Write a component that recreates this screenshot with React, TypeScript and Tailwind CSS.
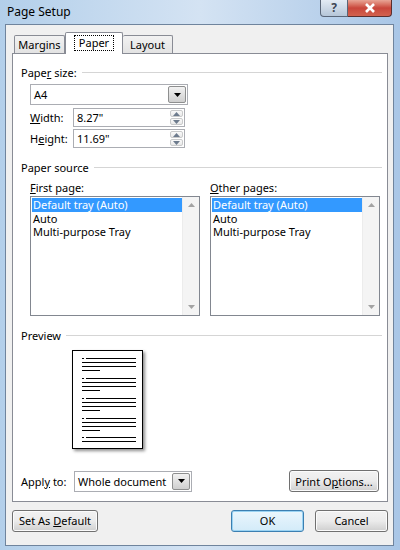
const font = { fontFamily: '"Noto Sans", "Liberation Sans", sans-serif' };

function GroupLabel({ children }: { children: React.ReactNode }) {
  return (
    <div className="flex items-center h-[15px] pl-[8px] pr-[5px]">
      <span className="pr-[5px]">{children}</span>
      <div className="flex-1 border-t border-[#d5d5d5] border-b-white h-[2px] border-b" />
    </div>
  );
}

function DownArrow({ color = '#000' }: { color?: string }) {
  return (
    <svg width="7" height="4" viewBox="0 0 7 4">
      <path d="M0 0h7L3.5 4z" fill={color} />
    </svg>
  );
}

function UpArrow({ color = '#000' }: { color?: string }) {
  return (
    <svg width="7" height="4" viewBox="0 0 7 4">
      <path d="M0 4h7L3.5 0z" fill={color} />
    </svg>
  );
}

function Combo({ value, width }: { value: string; width: string }) {
  return (
    <div className={`flex h-[21px] ${width} border border-[#abadb3] bg-white`}>
      <div className="flex-1 flex items-center pl-[3px] whitespace-nowrap overflow-hidden">{value}</div>
      <div className="w-[18px] m-px flex items-center justify-center border border-[#8e8f8f] rounded-[2px] bg-gradient-to-b from-[#f2f2f2] to-[#cfcfcf]">
        <DownArrow />
      </div>
    </div>
  );
}

function Spin({ value }: { value: string }) {
  return (
    <div className="flex h-[19px] w-[112px] border border-[#abadb3] bg-white">
      <div className="flex-1 flex items-center pl-[3px]">{value}</div>
      <div className="w-[15px] flex flex-col p-px gap-px">
        <div className="flex-1 flex items-center justify-center border border-[#c9cacb] rounded-[2px] bg-gradient-to-b from-[#fafafa] to-[#e9e9e9]">
          <UpArrow color="#6d7b8d" />
        </div>
        <div className="flex-1 flex items-center justify-center border border-[#c9cacb] rounded-[2px] bg-gradient-to-b from-[#fafafa] to-[#e9e9e9]">
          <DownArrow color="#6d7b8d" />
        </div>
      </div>
    </div>
  );
}

function TrayList() {
  const items = ['Default tray (Auto)', 'Auto', 'Multi-purpose Tray'];
  return (
    <div className="flex w-[170px] h-[120px] border border-[#828790] bg-white">
      <div className="flex-1 pt-px pl-px">
        {items.map((it, i) => (
          <div
            key={it}
            className={`h-[13.5px] leading-[13.5px] pl-[1px] whitespace-nowrap ${i === 0 ? 'bg-[#3399ff] text-white' : ''}`}
          >
            {it}
          </div>
        ))}
      </div>
      <div className="w-[17px] bg-[#f4f4f4] flex flex-col justify-between items-center py-[6px] border-l border-[#ececec]">
        <UpArrow color="#a3a3a3" />
        <DownArrow color="#a3a3a3" />
      </div>
    </div>
  );
}

function Btn({ children, width, primary }: { children: React.ReactNode; width: string; primary?: boolean }) {
  return (
    <div
      className={`${width} h-[22px] flex items-center justify-center rounded-[3px] border whitespace-nowrap ${
        primary
          ? 'border-[#3c7fb1] shadow-[inset_0_0_0_1px_#9ad3f3] bg-gradient-to-b from-[#eaf6fd] to-[#d3ebf9]'
          : 'border-[#707070] shadow-[inset_0_0_0_1px_#fbfbfb] bg-gradient-to-b from-[#f2f2f2] via-[#ebebeb] to-[#cfcfcf]'
      }`}
    >
      {children}
    </div>
  );
}

function PreviewPage() {
  const groups = [7, 27, 47, 67];
  return (
    <div className="ml-[59px] w-[71px] h-[99px] border border-black bg-white shadow-[2px_2px_3px_rgba(0,0,0,0.45)]">
      <svg width="69" height="97" viewBox="0 0 69 97" shapeRendering="crispEdges">
        <g stroke="#000" strokeWidth="1">
          {groups.map((y) => (
            <g key={y}>
              <path d={`M9 ${y + 0.5}h2M13 ${y + 0.5}h50`} />
              <path d={`M9 ${y + 4.5}h54`} />
              <path d={`M9 ${y + 8.5}h54`} />
              <path d={`M9 ${y + 12.5}h18`} />
            </g>
          ))}
          <path d="M9 86.5h2M13 86.5h50" />
          <path d="M9 90.5h54" />
        </g>
      </svg>
    </div>
  );
}

export default function App() {
  return (
    <div
      className="w-[400px] h-[550px] flex flex-col text-[11px] text-black bg-gradient-to-r from-[#b3cfea] via-[#d4e3f3] to-[#a9c6e6]"
      style={font}
    >
      {/* Title bar */}
      <div className="h-[24px] flex items-start justify-between pl-[7px] pr-[8px]">
        <span className="pt-[4px] leading-[15px] text-[12px]">Page Setup</span>
        <div className="flex h-[17px]">
          <div className="w-[28px] flex items-center justify-center rounded-bl-[4px] border border-[#5a6678] border-t-0 bg-gradient-to-b from-[#e3ebf4] to-[#b6c6d8] text-[#3d4654] font-bold text-[12px] leading-none">
            ?
          </div>
          <div className="w-[44px] flex items-center justify-center rounded-br-[4px] border border-[#5a2e2e] border-t-0 border-l-0 bg-gradient-to-b from-[#e8a596] via-[#c9463b] to-[#d2624f]">
            <svg width="12" height="10" viewBox="0 0 12 10">
              <path d="M2 1l8 8M10 1l-8 8" stroke="#fff" strokeWidth="2.6" />
            </svg>
          </div>
        </div>
      </div>

      {/* Client area */}
      <div className="ml-[5px] mr-[6px] h-[522px] border border-[#6f849d] bg-[#f0f0f0] pl-[6px] pr-[5px] pt-[8px]">
        {/* Tabs */}
        <div className="flex items-end h-[20px] pl-[2px]">
          <div className="w-[51px] h-[18px] flex items-center justify-center pt-[1px] border border-b-0 border-[#898c95] bg-gradient-to-b from-[#f2f2f2] to-[#e3e3e3] rounded-t-[2px]">
            Margins
          </div>
          <div className="relative z-10 -mb-px w-[58px] h-[22px] flex items-start justify-center pt-[3px] border border-b-0 border-[#898c95] bg-white rounded-t-[2px]">
            <span className="outline outline-1 outline-dotted outline-black px-[4px] leading-[14px]">Paper</span>
          </div>
          <div className="w-[50px] h-[18px] flex items-center justify-center pt-[1px] border border-b-0 border-l-0 border-[#898c95] bg-gradient-to-b from-[#f2f2f2] to-[#e3e3e3] rounded-t-[2px]">
            Layout
          </div>
        </div>

        {/* Panel */}
        <div className="h-[449px] border border-[#898c95] bg-white flex flex-col leading-[15px]">
          <div className="mt-[11px]">
            <GroupLabel>
              Pape<u>r</u> size:
            </GroupLabel>
          </div>
          <div className="mt-[4px] ml-[17px]">
            <Combo value="A4" width="w-[158px]" />
          </div>
          <div className="mt-[3px] ml-[17px] flex items-center">
            <span className="w-[43px]">
              <u>W</u>idth:
            </span>
            <Spin value={'8.27"'} />
          </div>
          <div className="mt-[2px] ml-[17px] flex items-center">
            <span className="w-[43px]">
              H<u>e</u>ight:
            </span>
            <Spin value={'11.69"'} />
          </div>

          <div className="mt-[12px]">
            <GroupLabel>Paper source</GroupLabel>
          </div>
          <div className="mt-[5px] ml-[17px] flex gap-[10px]">
            <div className="flex flex-col gap-[1px]">
              <span>
                <u>F</u>irst page:
              </span>
              <TrayList />
            </div>
            <div className="flex flex-col gap-[1px]">
              <span>
                <u>O</u>ther pages:
              </span>
              <TrayList />
            </div>
          </div>

          <div className="mt-[12px]">
            <GroupLabel>Preview</GroupLabel>
          </div>
          <div className="mt-[7px]">
            <PreviewPage />
          </div>

          <div className="mt-[21px] flex items-center pl-[8px] pr-[8px]">
            <span className="w-[53px]">
              Appl<u>y</u> to:
            </span>
            <Combo value="Whole document" width="w-[118px]" />
            <div className="flex-1" />
            <Btn width="w-[90px]">
              <span>
                Print O<u>p</u>tions...
              </span>
            </Btn>
          </div>
        </div>

        {/* Bottom buttons */}
        <div className="mt-[8px] flex items-center">
          <Btn width="w-[86px]">
            <span>
              Set As <u>D</u>efault
            </span>
          </Btn>
          <div className="flex-1" />
          <Btn width="w-[73px]" primary>
            OK
          </Btn>
          <div className="w-[11px]" />
          <Btn width="w-[73px]">Cancel</Btn>
        </div>
      </div>
    </div>
  );
}
